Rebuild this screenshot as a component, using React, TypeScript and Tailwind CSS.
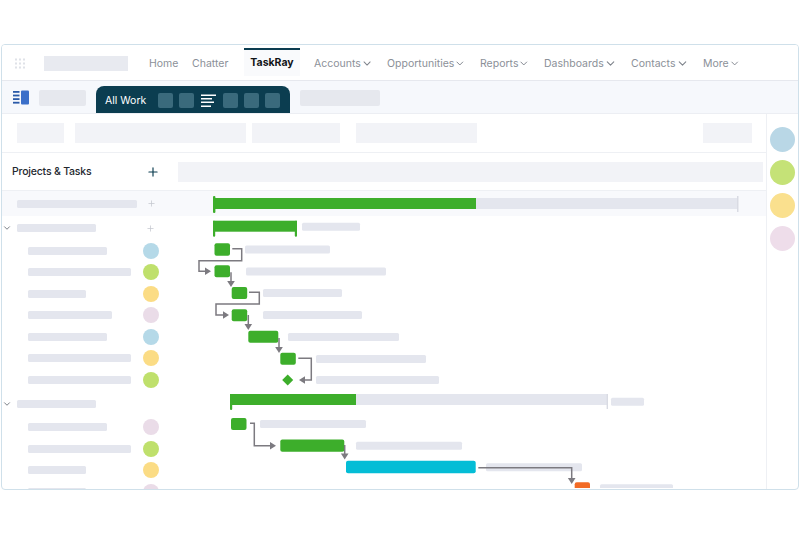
import { ChevronDown, Plus } from "lucide-react";

const F = "font-['Inter','Liberation_Sans',sans-serif]";

function NavItem({ label, wide }: { label: string; wide: string }) {
  return (
    <div className={`flex items-center justify-between ${wide}`}>
      <span className="mt-[2px] text-[10.5px] leading-none text-[#8b9098]">{label}</span>
      <ChevronDown size={13} strokeWidth={2} className="-mr-[3px] mt-px text-[#7f848c]" />
    </div>
  );
}

function Arrow({ d, tip, dir }: { d: string; tip: [number, number]; dir: "r" | "d" | "l" }) {
  const [x, y] = tip;
  const pts =
    dir === "r"
      ? `${x},${y} ${x - 6},${y - 3.8} ${x - 6},${y + 3.8}`
      : dir === "l"
        ? `${x},${y} ${x + 6},${y - 3.8} ${x + 6},${y + 3.8}`
        : `${x},${y} ${x - 3.8},${y - 6} ${x + 3.8},${y - 6}`;
  return (
    <g>
      <path d={d} fill="none" stroke="#7c7a80" strokeWidth="1.5" />
      <polygon points={pts} fill="#7c7a80" />
    </g>
  );
}

function Gantt() {
  const G = "#3dae2b";
  const L = "#e4e6ee";
  const tasks: [number, number, number, number][] = [
    [214.5, 243.3, 15.5, 12.4],
    [214.5, 265.3, 15.5, 12],
    [231.7, 287, 15.5, 12],
    [231.7, 309.3, 15.5, 12],
    [248.3, 330.7, 30, 12],
    [280.3, 352.7, 15.5, 12],
    [231, 418, 15.5, 12],
    [280.3, 439.5, 64, 12.2],
  ];
  const labels: [number, number, number][] = [
    [302, 222.7, 58],
    [245, 245.5, 85],
    [246, 267.5, 140],
    [263, 289, 79],
    [263, 311, 99],
    [288, 333, 111],
    [316, 355, 110],
    [316, 376, 123],
    [611, 397.7, 33],
    [260, 420, 106],
    [356, 441.7, 106],
    [486, 463.3, 96],
    [600, 484.3, 73],
  ];
  return (
    <svg viewBox="178 191 588 297" width="588" height="297" className="block">
      <rect x="178" y="191" width="588" height="25" fill="#f8f9fc" />
      <rect x="476" y="198" width="262" height="11" fill={L} />
      <rect x="737" y="196" width="1.5" height="16" fill="#d9dbe3" />
      <rect x="213" y="198" width="263" height="11" fill={G} />
      <rect x="213" y="196" width="2.4" height="17" rx="1" fill={G} />

      <rect x="213" y="220.7" width="84" height="11" fill={G} />
      <rect x="213" y="220.7" width="2.2" height="16" rx="1" fill={G} />
      <rect x="294.8" y="220.7" width="2.2" height="16" rx="1" fill={G} />

      <rect x="356" y="394" width="252" height="11" fill={L} />
      <rect x="606.6" y="394" width="1.4" height="15" fill="#d9dbe3" />
      <rect x="230" y="394" width="126" height="11" fill={G} />
      <rect x="230" y="394" width="2.2" height="16" rx="1" fill={G} />

      {labels.map(([x, y, w]) => (
        <rect key={`${x}-${y}`} x={x} y={y} width={w} height="8" rx="1.5" fill={L} />
      ))}

      {tasks.map(([x, y, w, h]) => (
        <rect key={`${x}-${y}`} x={x} y={y} width={w} height={h} rx="2" fill={G} />
      ))}
      <rect x="346" y="460.8" width="129.7" height="12.5" rx="2" fill="#04bdd6" />
      <rect x="574.7" y="482.3" width="15.3" height="12" rx="2" fill="#f26b26" />
      <polygon points="287.7,374.5 293.2,380 287.7,385.5 282.2,380" fill={G} />

      <Arrow d="M232.3 248.7H241.7V260.7H199V271.3H207" tip={[211, 271.3]} dir="r" />
      <Arrow d="M231 272.3V283" tip={[231, 287]} dir="d" />
      <Arrow d="M249 292.3H259.3V304H216V315H225" tip={[229, 315]} dir="r" />
      <Arrow d="M248.3 315V326" tip={[248.3, 330]} dir="d" />
      <Arrow d="M279 338V349" tip={[279, 353]} dir="d" />
      <Arrow d="M298.3 358.3H311.3V380H303" tip={[299, 380]} dir="l" />
      <Arrow d="M250 423.3H254.3V445.7H272" tip={[276, 445.7]} dir="r" />
      <Arrow d="M344.7 445V455" tip={[344.7, 459.5]} dir="d" />
      <Arrow d="M478.3 467.7H571.7V480" tip={[571.7, 484]} dir="d" />
    </svg>
  );
}

function ChildRow({ w, c }: { w: string; c: string }) {
  return (
    <div className="flex h-[21.5px] shrink-0 items-center">
      <div className="w-[141px] pl-[26px]">
        <div className={`h-[8px] rounded-[1.5px] bg-[#e4e6ee] ${w}`} />
      </div>
      <div className={`h-4 w-4 rounded-full ${c}`} />
    </div>
  );
}

export default function App() {
  return (
    <div className={`h-[533px] w-[800px] overflow-hidden bg-white pl-px pr-px pt-[44px] ${F}`}>
      <div className="flex h-[446px] flex-col overflow-hidden rounded-[4px] border border-[#cfe0ea]">
        {/* Top nav */}
        <div className="flex h-[36px] shrink-0 items-center border-b border-[#e6e8ee] bg-white pt-px">
          <div className="ml-[13px] mr-[19px] w-[10px]">
            <svg width="10" height="11" viewBox="0 0 10 11">
              {[0, 4, 8].map((x) =>
                [0, 4, 8].map((y) => <rect key={`${x}${y}`} x={x} y={y + 0.5} width="2" height="2" fill="#dfe2e8" />),
              )}
            </svg>
          </div>
          <div className="h-[15px] w-[84px] bg-[#e8eaf0]" />
          <div className="ml-[21px] mt-[2px] w-[43px] text-[10.5px] leading-none text-[#8b9098]">Home</div>
          <div className="mt-[2px] w-[52px] text-[10.5px] leading-none text-[#8b9098]">Chatter</div>
          <div className="mt-[2px] flex h-[28px] w-[56px] items-center justify-center self-start border-t-[2.5px] border-[#0b3c50] bg-[#f9fafc] pt-px text-[10.5px] font-bold leading-none text-[#111418]">
            TaskRay
          </div>
          <div className="ml-[14px] flex gap-[17px]">
            <NavItem label="Accounts" wide="w-[56px]" />
            <NavItem label="Opportunities" wide="w-[76px]" />
            <NavItem label="Reports" wide="w-[47px]" />
            <NavItem label="Dashboards" wide="w-[70px]" />
            <NavItem label="Contacts" wide="w-[55px]" />
            <NavItem label="More" wide="w-[34px]" />
          </div>
        </div>

        {/* Sub nav */}
        <div className="flex h-[33px] shrink-0 items-end border-b border-[#eceef3] bg-[#f6f8fc]">
          <div className="mb-[8px] ml-[11px] mr-[10px] w-[16px]">
            <svg width="16" height="15" viewBox="0 0 16 15">
              <rect x="0" y="1" width="6.5" height="1.8" fill="#2a5aa8" />
              <rect x="0" y="4.6" width="6.5" height="1.8" fill="#2a5aa8" />
              <rect x="0" y="8.2" width="6.5" height="1.8" fill="#2a5aa8" />
              <rect x="0" y="11.8" width="6.5" height="1.8" fill="#2a5aa8" />
              <rect x="8" y="0.5" width="8" height="14" rx="1" fill="#3b6fc9" />
            </svg>
          </div>
          <div className="mb-[7px] h-[16px] w-[47px] rounded-[2px] bg-[#e6e8ee]" />
          <div className="ml-[10px] flex h-[27px] w-[194px] items-center rounded-t-[8px] bg-[#0b3d50] pl-[9px] pt-[2px]">
            <span className="mt-[2px] w-[53px] text-[10.5px] leading-none text-white">All Work</span>
            <div className="flex items-center gap-[6px]">
              <div className="h-[15px] w-[15px] rounded-[2px] bg-[#3a6a7c]" />
              <div className="h-[15px] w-[15px] rounded-[2px] bg-[#3a6a7c]" />
              <svg width="15" height="14" viewBox="0 0 15 14" className="mx-[1px]">
                <rect x="0" y="0.5" width="15" height="1.5" fill="#fff" />
                <rect x="0" y="4" width="11" height="1.5" fill="#fff" />
                <rect x="0" y="7.5" width="13" height="1.5" fill="#fff" />
                <rect x="0" y="11.5" width="10" height="1.5" fill="#fff" />
              </svg>
              <div className="h-[15px] w-[15px] rounded-[2px] bg-[#3a6a7c]" />
              <div className="h-[15px] w-[15px] rounded-[2px] bg-[#3a6a7c]" />
              <div className="h-[15px] w-[15px] rounded-[2px] bg-[#3a6a7c]" />
            </div>
          </div>
          <div className="mb-[7px] ml-[10px] h-[16px] w-[80px] rounded-[2px] bg-[#e6e8ee]" />
        </div>

        {/* Body */}
        <div className="flex min-h-0 flex-1">
          <div className="flex min-w-0 flex-1 flex-col">
            <div className="flex h-[39px] shrink-0 items-center border-b border-[#eef0f4] pl-[15px] pr-[14px]">
              <div className="h-[20px] w-[47px] bg-[#f2f3f7]" />
              <div className="ml-[11px] h-[20px] w-[171px] bg-[#f2f3f7]" />
              <div className="ml-[6px] h-[20px] w-[88px] bg-[#f2f3f7]" />
              <div className="ml-[16px] h-[20px] w-[121px] bg-[#f2f3f7]" />
              <div className="ml-auto h-[20px] w-[49px] bg-[#f2f3f7]" />
            </div>
            <div className="flex h-[38px] shrink-0 items-center border-b border-[#eef0f4]">
              <div className="flex w-[176px] items-center justify-between pl-[10px] pr-[18px]">
                <span className="mt-px text-[10.5px] font-medium leading-none tracking-[-0.2px] text-[#23272e]">Projects &amp; Tasks</span>
                <Plus size={14} strokeWidth={2} className="text-[#0b3d50]" />
              </div>
              <div className="mr-[3px] h-[20px] flex-1 bg-[#f2f3f7]" />
            </div>
            <div className="flex min-h-0 flex-1">
              <div className="flex w-[176px] shrink-0 flex-col overflow-hidden">
                <div className="flex h-[25px] shrink-0 items-center bg-[#f8f9fc]">
                  <div className="w-[141px] pl-[15px]">
                    <div className="h-[8px] w-[120px] rounded-[1.5px] bg-[#e4e6ee]" />
                  </div>
                  <div className="flex w-4 justify-center">
                    <Plus size={9} className="text-[#c4c7cf]" />
                  </div>
                </div>
                <div className="flex h-[24px] shrink-0 items-center">
                  <ChevronDown size={10} strokeWidth={2.2} className="w-[10px] text-[#6f747c]" />
                  <div className="ml-[5px] h-[8px] w-[79px] rounded-[1.5px] bg-[#e4e6ee]" />
                  <div className="ml-[46px] flex w-4 justify-center">
                    <Plus size={9} className="text-[#c4c7cf]" />
                  </div>
                </div>
                <ChildRow w="w-[79px]" c="bg-[#b5d9e8]" />
                <ChildRow w="w-[103px]" c="bg-[#bfe06c]" />
                <ChildRow w="w-[58px]" c="bg-[#fbdc85]" />
                <ChildRow w="w-[84px]" c="bg-[#eadce8]" />
                <ChildRow w="w-[79px]" c="bg-[#b5d9e8]" />
                <ChildRow w="w-[103px]" c="bg-[#fbdc85]" />
                <ChildRow w="w-[103px]" c="bg-[#bfe06c]" />
                <div className="flex h-[26px] shrink-0 items-center">
                  <ChevronDown size={10} strokeWidth={2.2} className="w-[10px] text-[#6f747c]" />
                  <div className="ml-[5px] h-[8px] w-[79px] rounded-[1.5px] bg-[#e4e6ee]" />
                </div>
                <ChildRow w="w-[79px]" c="bg-[#eadce8]" />
                <ChildRow w="w-[103px]" c="bg-[#bfe06c]" />
                <ChildRow w="w-[58px]" c="bg-[#fbdc85]" />
                <ChildRow w="w-[58px]" c="bg-[#eadce8]" />
              </div>
              <div className="min-w-0 flex-1 overflow-hidden">
                <Gantt />
              </div>
            </div>
          </div>
          <div className="flex w-[32px] shrink-0 flex-col items-center gap-[8px] border-l border-[#eef0f4] pt-[13px]">
            <div className="h-[25px] w-[25px] shrink-0 rounded-full bg-[#b9d7e6]" />
            <div className="h-[25px] w-[25px] shrink-0 rounded-full bg-[#c5e277]" />
            <div className="h-[25px] w-[25px] shrink-0 rounded-full bg-[#fae08e]" />
            <div className="h-[25px] w-[25px] shrink-0 rounded-full bg-[#eeddea]" />
          </div>
        </div>
      </div>
    </div>
  );
}
